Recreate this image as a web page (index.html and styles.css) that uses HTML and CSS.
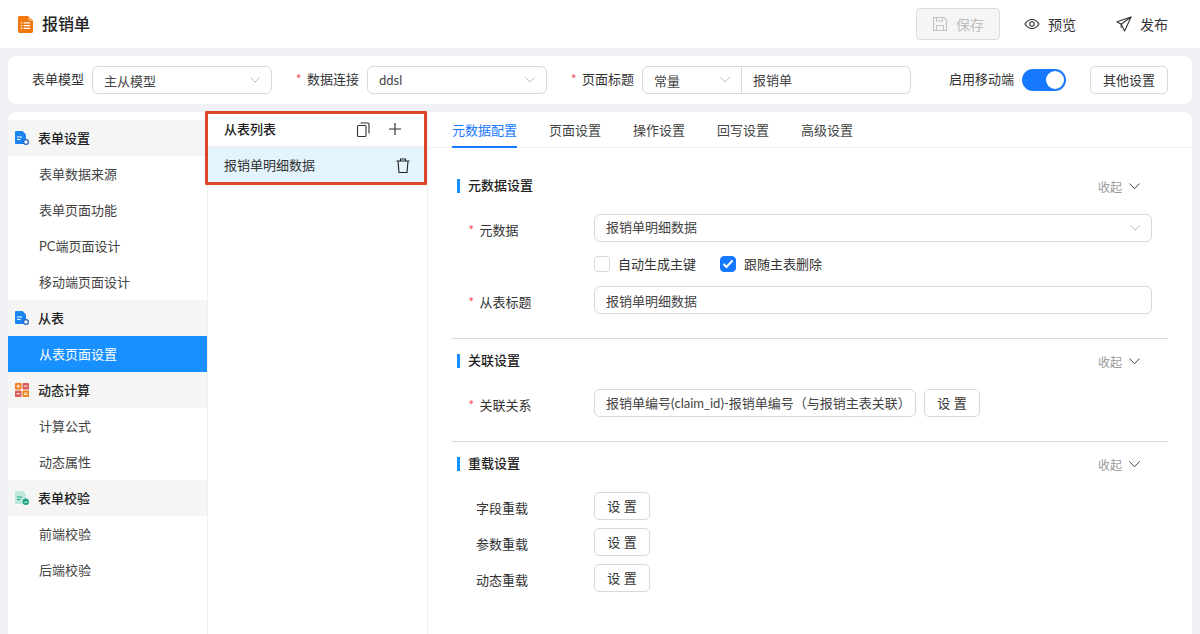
FILE: index.html
```html
<!DOCTYPE html>
<html lang="zh-CN">

<head>
    <meta charset="UTF-8">
    <meta name="viewport" content="width=device-width, initial-scale=1.0">
    <title>报销单</title>
    <link rel="stylesheet" href="styles.css">
</head>

<body>
    <header class="topbar">
        <div class="brand">
            <svg class="brand-icon" width="15" height="17" viewBox="0 0 16 18">
                <path d="M1.500 0H11l5 5v11.500a1.500 1.500 0 0 1-1.500 1.500H1.500A1.500 1.500 0 0 1 0 16.500V1.500A1.500 1.500 0 0 1 1.500 0z" fill="#f0780f"/>
                <path d="M11 0l5 5h-3.500A1.500 1.500 0 0 1 11 3.500z" fill="#f8b578"/>
                <path d="M3 7.200h1.500M6 7.200h7M3 10.200h1.500M6 10.200h7M3 13.200h1.500M6 13.200h7" stroke="#fff" stroke-width="1.300"/>
            </svg>
            <span>报销单</span>
        </div>
        <nav class="actions">
            <button class="btn-save" type="button">
                <svg width="16" height="16" viewBox="0 0 16 16" fill="none" stroke="#c4c4c4" stroke-width="1.100">
                    <path d="M1.500 1.500h10.500l2.500 2.500v10.500h-13z"/>
                    <path d="M4.500 1.500v3.500h6v-3.500M4.500 14.500v-5h7v5"/>
                </svg>
                保存
            </button>
            <a class="action" href="#">
                <svg width="16" height="16" viewBox="0 0 16 16" fill="none" stroke="#333" stroke-width="1.100">
                    <path d="M1 8c1.800-3 4.100-4.500 7-4.500s5.200 1.500 7 4.500c-1.800 3-4.100 4.500-7 4.500S2.800 11 1 8z"/>
                    <circle cx="8" cy="8" r="2.200"/>
                </svg>
                预览
            </a>
            <a class="action" href="#">
                <svg width="16" height="16" viewBox="0 0 16 16" fill="none" stroke="#333" stroke-width="1.100" stroke-linejoin="round">
                    <path d="M15 1L1 5.700l4.200 2.600L8.600 15z"/>
                    <path d="M15 1L5.200 8.300v3.500"/>
                </svg>
                发布
            </a>
        </nav>
    </header>

    <section class="toolbar">
        <label class="field field-model">
            <span class="field-label">表单模型</span>
            <span class="select select-low">主从模型<svg class="chevron" width="10" height="6" viewBox="0 0 10 6"><path d="M.4.400L5 5.200 9.600.400"/></svg></span>
        </label>
        <label class="field field-conn">
            <span class="field-label"><i class="star">*</i>数据连接</span>
            <span class="select">ddsl<svg class="chevron" width="10" height="6" viewBox="0 0 10 6"><path d="M.4.400L5 5.200 9.600.400"/></svg></span>
        </label>
        <div class="field">
            <span class="field-label"><i class="star">*</i>页面标题</span>
            <span class="select select-type select-low">常量<svg class="chevron" width="10" height="6" viewBox="0 0 10 6"><path d="M.4.400L5 5.200 9.600.400"/></svg></span>
            <span class="input input-title">报销单</span>
        </div>
        <div class="toolbar-right">
            <span class="field-label">启用移动端</span>
            <span class="switch"></span>
            <button class="btn btn-other" type="button">其他设置</button>
        </div>
    </section>

    <main class="main">
        <aside class="sidebar">
            <div class="side-group">
                <svg width="14" height="14" viewBox="0 0 14 14">
                    <path d="M1 0h6.500L11 3.500V13H1a1 1 0 0 1-1-1V1a1 1 0 0 1 1-1z" fill="#1a84f0"/>
                    <path d="M2 6h5M2 8.500h3.500" stroke="#fff"/>
                    <circle cx="11" cy="11" r="2.400" fill="#fff" stroke="#1f5fbf" stroke-width="1.200"/>
                </svg>
                表单设置
            </div>
            <a class="side-item" href="#">表单数据来源</a>
            <a class="side-item" href="#">表单页面功能</a>
            <a class="side-item" href="#">PC端页面设计</a>
            <a class="side-item" href="#">移动端页面设计</a>
            <div class="side-group">
                <svg width="14" height="14" viewBox="0 0 14 14">
                    <path d="M1 0h6.500L11 3.500V13H1a1 1 0 0 1-1-1V1a1 1 0 0 1 1-1z" fill="#1a84f0"/>
                    <path d="M2 6h5M2 8.500h3.500" stroke="#fff"/>
                    <circle cx="11" cy="11" r="2.400" fill="#fff" stroke="#1f5fbf" stroke-width="1.200"/>
                </svg>
                从表
            </div>
            <a class="side-item active" href="#">从表页面设置</a>
            <div class="side-group">
                <svg width="14" height="14" viewBox="0 0 14 14">
                    <rect width="6.500" height="6.500" rx=".8" fill="#f0801a"/>
                    <rect x="7.500" width="6.500" height="6.500" rx=".8" fill="#d9605a"/>
                    <rect y="7.500" width="6.500" height="6.500" rx=".8" fill="#d9605a"/>
                    <rect x="7.500" y="7.500" width="6.500" height="6.500" rx=".8" fill="#f0801a"/>
                    <path d="M1.500 3.200h3.500M3.200 1.500V5M9 3.200h3.500M1.500 10.800h3.500M9 10h3.500M9 11.600h3.500" stroke="#fff" stroke-width=".9"/>
                </svg>
                动态计算
            </div>
            <a class="side-item" href="#">计算公式</a>
            <a class="side-item" href="#">动态属性</a>
            <div class="side-group">
                <svg width="14" height="14" viewBox="0 0 14 14">
                    <path d="M1 0h6.500L11 3.500V13H1a1 1 0 0 1-1-1V1a1 1 0 0 1 1-1z" fill="#bfe8dc"/>
                    <path d="M2 6h5M2 8.500h3.500" stroke="#1aa583"/>
                    <circle cx="10.800" cy="10.800" r="3.200" fill="#1aa583"/>
                    <path d="M9.300 10.800l1.200 1.200 1.900-2" stroke="#fff" fill="none"/>
                </svg>
                表单校验
            </div>
            <a class="side-item" href="#">前端校验</a>
            <a class="side-item" href="#">后端校验</a>
        </aside>

        <section class="sublist">
            <div class="sublist-head">
                <span>从表列表</span>
                <div class="sublist-tools">
                    <svg width="14" height="15" viewBox="0 0 14 15" fill="none" stroke="#333" stroke-width="1.100">
                        <rect x="1.500" y="3.500" width="8.500" height="11" rx="1"/>
                        <path d="M4.500 1h7.500a1 1 0 0 1 1 1v9.500"/>
                    </svg>
                    <svg width="14" height="14" viewBox="0 0 14 14" fill="none" stroke="#333" stroke-width="1.200">
                        <path d="M7 1v12M1 7h12"/>
                    </svg>
                </div>
            </div>
            <div class="sublist-item">
                <span>报销单明细数据</span>
                <svg width="14" height="15" viewBox="0 0 14 15" fill="none" stroke="#222" stroke-width="1.100">
                    <path d="M.5 3h13M4.500 3V1h5v2M2 3l1 11.500h8L12 3"/>
                </svg>
            </div>
            <div class="highlight"></div>
        </section>

        <section class="detail">
            <nav class="tabs">
                <a class="tab current" href="#">元数据配置</a>
                <a class="tab" href="#">页面设置</a>
                <a class="tab" href="#">操作设置</a>
                <a class="tab" href="#">回写设置</a>
                <a class="tab" href="#">高级设置</a>
            </nav>

            <div class="panel first">
                <div class="panel-head">
                    <h3>元数据设置</h3>
                    <span class="collapse">收起<svg width="11" height="7" viewBox="0 0 11 7"><path d="M.5.500L5.500 5.800 10.500.500"/></svg></span>
                </div>
                <div class="row">
                    <span class="row-label"><i class="star">*</i>元数据</span>
                    <span class="select wide">报销单明细数据<svg class="chevron" width="10" height="6" viewBox="0 0 10 6"><path d="M.4.400L5 5.200 9.600.400"/></svg></span>
                </div>
                <div class="row">
                    <span class="row-label"></span>
                    <span class="check"><i class="box"></i>自动生成主键</span>
                    <span class="check"><i class="box on"><svg width="12" height="10" viewBox="0 0 12 10"><path d="M1.500 5l3 3 6-6.500" fill="none" stroke="#fff" stroke-width="2"/></svg></i>跟随主表删除</span>
                </div>
                <div class="row">
                    <span class="row-label"><i class="star">*</i>从表标题</span>
                    <span class="input wide">报销单明细数据</span>
                </div>
            </div>

            <div class="panel">
                <div class="panel-head">
                    <h3>关联设置</h3>
                    <span class="collapse">收起<svg width="11" height="7" viewBox="0 0 11 7"><path d="M.5.500L5.500 5.800 10.500.500"/></svg></span>
                </div>
                <div class="row">
                    <span class="row-label"><i class="star">*</i>关联关系</span>
                    <span class="input relation">报销单编号(claim_id)-报销单编号（与报销主表关联）</span>
                    <button class="btn btn-set" type="button">设 置</button>
                </div>
            </div>

            <div class="panel last">
                <div class="panel-head">
                    <h3>重载设置</h3>
                    <span class="collapse">收起<svg width="11" height="7" viewBox="0 0 11 7"><path d="M.5.500L5.500 5.800 10.500.500"/></svg></span>
                </div>
                <div class="row">
                    <span class="row-label plain">字段重载</span>
                    <button class="btn btn-set" type="button">设 置</button>
                </div>
                <div class="row">
                    <span class="row-label plain">参数重载</span>
                    <button class="btn btn-set" type="button">设 置</button>
                </div>
                <div class="row">
                    <span class="row-label plain">动态重载</span>
                    <button class="btn btn-set" type="button">设 置</button>
                </div>
            </div>
        </section>
    </main>
</body>

</html>
```

FILE: styles.css
```css
html {
    box-sizing: border-box;
    font-family: Lato, "Noto Sans CJK SC", sans-serif;
    font-size: 13px;
}

*,
*:before,
*:after {
    box-sizing: inherit;
}

body {
    margin: 0;
    height: 634px;
    overflow: hidden;
    background-color: #f0f1f5;
    color: #333;
    display: flex;
    flex-direction: column;
}

a {
    color: inherit;
    text-decoration: none;
}

i {
    font-style: normal;
}

button {
    font-family: inherit;
    font-size: 13px;
}

/* top bar */
.topbar {
    height: 48px;
    flex-shrink: 0;
    background-color: #fff;
    display: flex;
    justify-content: space-between;
    align-items: center;
    padding: 0 32px 0 18px;
}

.brand {
    display: flex;
    align-items: center;
    gap: 9px;
    font-size: 16px;
    font-weight: 500;
    color: #222;
}

.brand span {
    padding-bottom: 2px;
}

.actions {
    display: flex;
    align-items: center;
    font-size: 14px;
}

.btn-save {
    width: 84px;
    height: 32px;
    display: flex;
    align-items: center;
    justify-content: center;
    gap: 8px;
    background-color: #f5f5f5;
    border: 1px solid #dcdcdc;
    border-radius: 4px;
    font-size: 14px;
    color: #bdbdbd;
}

.action {
    display: flex;
    align-items: center;
    gap: 8px;
    margin-left: 40px;
}

.action:first-of-type {
    margin-left: 24px;
}

/* toolbar */
.toolbar {
    height: 48px;
    flex-shrink: 0;
    margin: 8px 8px 0;
    padding: 0 24px;
    background-color: #fff;
    border-radius: 8px;
    display: flex;
    align-items: center;
}

.field {
    display: flex;
    align-items: center;
    gap: 8px;
}

.field-model,
.field-conn {
    margin-right: 24px;
}

.field-label {
    padding-bottom: 3px;
    white-space: nowrap;
}

.star {
    color: #f5484d;
    margin-right: 5.400px;
}

.select,
.input {
    height: 28px;
    line-height: 26px;
    padding: 0 11px;
    background-color: #fff;
    border: 1px solid #d9d9d9;
    border-radius: 6px;
    color: #444;
    white-space: nowrap;
}

.select {
    display: flex;
    justify-content: space-between;
    align-items: center;
    width: 180px;
}

.chevron {
    fill: none;
    stroke: #bcbcbc;
}

.select-low {
    padding-top: 2px;
}

.select-low .chevron {
    margin-top: -2px;
}

.select-type {
    width: 100px;
    border-radius: 6px 0 0 6px;
}

.input-title {
    width: 169px;
    margin-left: -8px;
    border-left: 0;
    border-radius: 0 6px 6px 0;
}

.toolbar-right {
    margin-left: auto;
    display: flex;
    align-items: center;
}

.switch {
    position: relative;
    width: 44px;
    height: 22px;
    margin: 0 24px 0 8px;
    border-radius: 11px;
    background-color: #1677ff;
}

.switch:after {
    content: "";
    position: absolute;
    top: 2px;
    right: 2px;
    width: 18px;
    height: 18px;
    border-radius: 50%;
    background-color: #fff;
}

.btn {
    height: 28px;
    background-color: #fff;
    border: 1px solid #d9d9d9;
    border-radius: 5px;
    color: #333;
    padding: 0 0 2px;
}

.btn-other {
    width: 78px;
}

.btn-set {
    width: 56px;
}

/* main area */
.main {
    flex-grow: 1;
    min-height: 0;
    margin: 8px 8px 0;
    background-color: #fff;
    border-radius: 8px 8px 0 0;
    display: flex;
}

.sidebar {
    width: 200px;
    flex-shrink: 0;
    padding-top: 8px;
    border-right: 1px solid #eee;
}

.side-group {
    height: 36px;
    padding: 0 0 2px 7px;
    display: flex;
    align-items: center;
    gap: 9px;
    background-color: #f5f5f5;
    font-weight: 500;
    color: #222;
}

.side-group svg {
    margin-top: 2px;
}

.side-item {
    display: block;
    height: 36px;
    line-height: 36px;
    padding-left: 31px;
    color: #444;
}

.side-item.active {
    background-color: #1890ff;
    color: #fff;
}

.sublist {
    position: relative;
    width: 220px;
    flex-shrink: 0;
    border-right: 1px solid #eee;
}

.sublist-head {
    height: 35px;
    padding: 0 25px 0 16px;
    display: flex;
    justify-content: space-between;
    align-items: center;
    border-bottom: 1px solid #eee;
    font-weight: 500;
    color: #222;
}

.sublist-head span,
.sublist-item span {
    padding-bottom: 2px;
}

.sublist-tools {
    display: flex;
    align-items: center;
    gap: 18px;
}

.sublist-item {
    height: 36px;
    padding: 0 17px 0 16px;
    display: flex;
    justify-content: space-between;
    align-items: center;
    background-color: #e3f4fd;
    color: #333;
}

/* red annotation frame around the list head */
.highlight {
    position: absolute;
    top: -1px;
    left: -3px;
    width: 222px;
    height: 74px;
    border: 3px solid #d9472b;
    border-radius: 1px;
}

/* detail pane */
.detail {
    flex-grow: 1;
    min-width: 0;
    padding: 0 24px;
}

.tabs {
    height: 36px;
    margin: 0 -24px;
    padding: 0 24px;
    display: flex;
    gap: 32px;
    border-bottom: 1px solid #eee;
}

.tab {
    height: 36px;
    line-height: 36px;
    color: #444;
}

.tab.current {
    color: #1677ff;
    border-bottom: 2px solid #1677ff;
}

.panel {
    padding: 12px 16px 24px 0;
    border-bottom: 1px solid #d9d9d9;
}

.panel.first {
    padding-top: 28px;
}

.panel.last {
    border-bottom: 0;
}

.panel-head {
    height: 20px;
    margin-bottom: 18px;
    display: flex;
    justify-content: space-between;
    align-items: center;
}

.panel-head h3 {
    margin: 0 0 0 5px;
    padding: 0 0 2px 8px;
    border-left: 3px solid #1890ff;
    font-size: 13px;
    line-height: 12px;
    font-weight: 500;
    color: #222;
}

.collapse {
    display: flex;
    align-items: center;
    gap: 7px;
    margin-right: 12px;
    font-size: 12px;
    color: #999;
}

.collapse svg {
    fill: none;
    stroke: #444;
}

.row {
    min-height: 28px;
    margin-bottom: 8px;
    display: flex;
    align-items: center;
}

.row:last-child {
    margin-bottom: 0;
}

.row-label {
    width: 142px;
    flex-shrink: 0;
    padding: 3px 0 0 16.600px;
}

.row-label.plain {
    padding: 2px 0 0 24px;
}

.wide {
    width: 558px;
}

.select.wide {
    padding-bottom: 2px;
}

.select.wide .chevron {
    margin-top: 1px;
}

.input.wide {
    line-height: 28px;
}

.relation {
    width: 322px;
    margin-right: 8px;
}

.check {
    display: flex;
    align-items: center;
    gap: 8px;
    margin-right: 24px;
    padding-bottom: 2px;
}

.box {
    width: 16px;
    height: 16px;
    margin-top: 2px;
    display: flex;
    align-items: center;
    justify-content: center;
    border: 1px solid #d9d9d9;
    border-radius: 4px;
    background-color: #fff;
}

.box.on {
    background-color: #1677ff;
    border-color: #1677ff;
}
```
